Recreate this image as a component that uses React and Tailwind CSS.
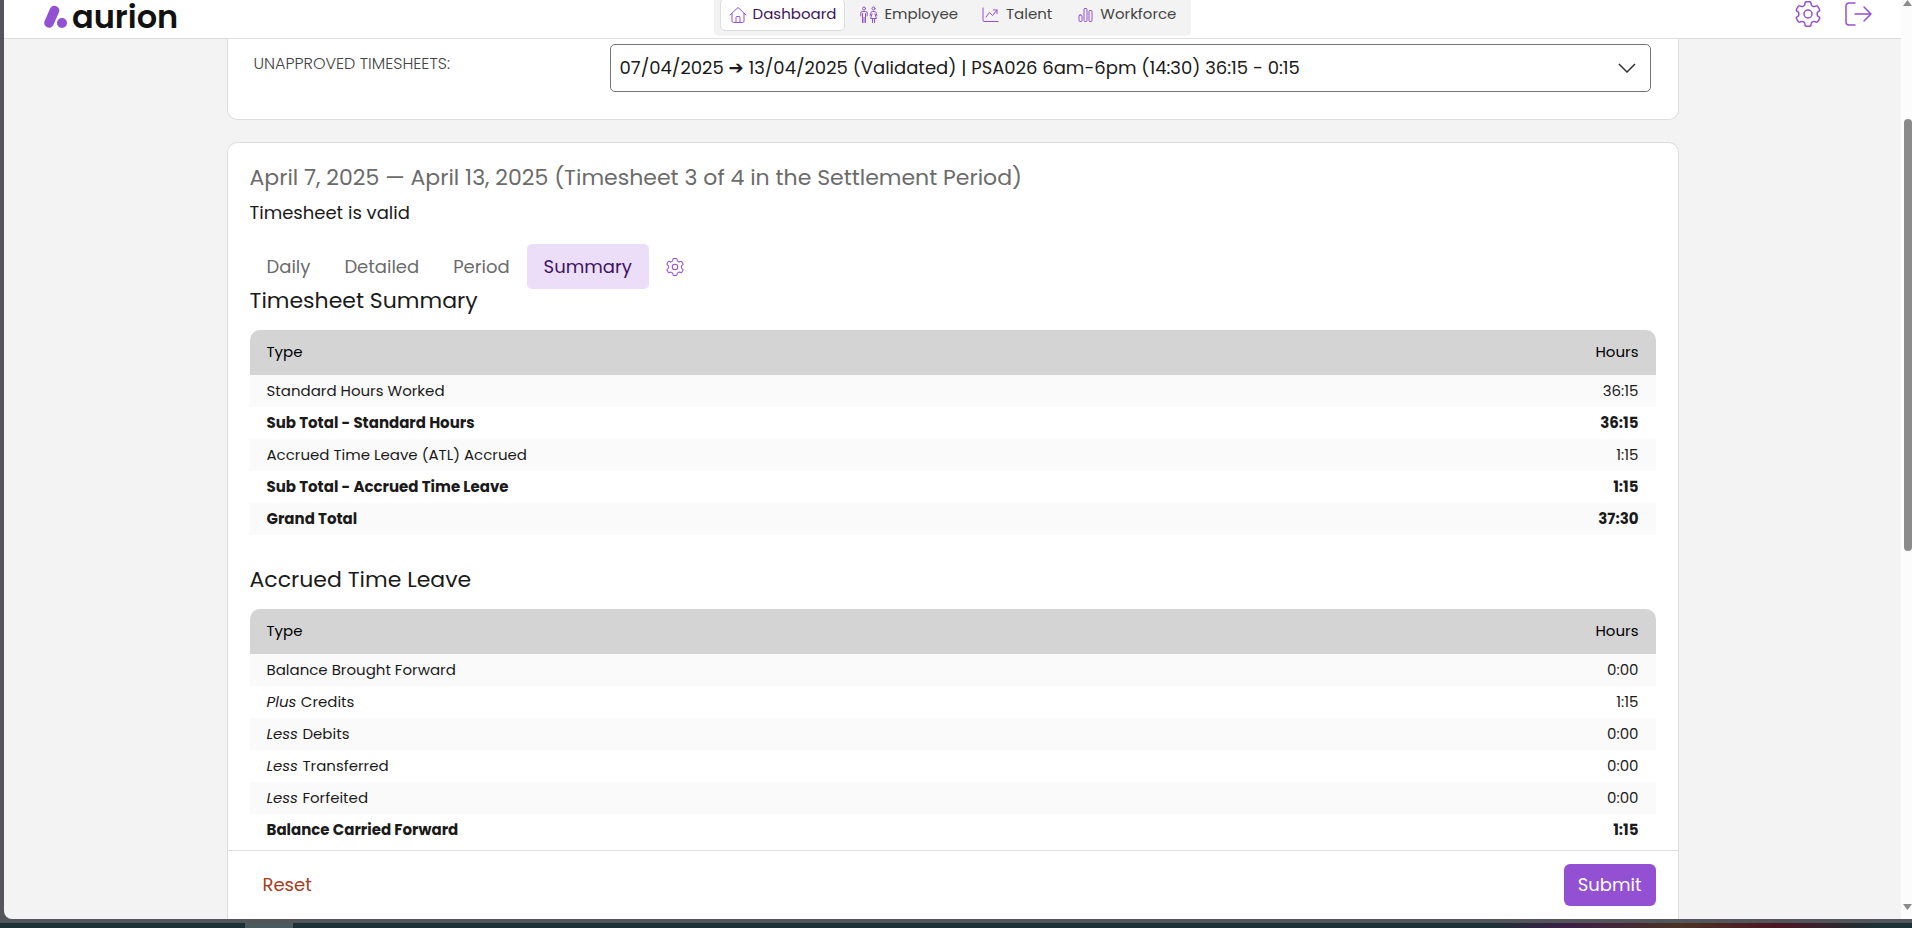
const summaryRows = [
  { type: "Standard Hours Worked", hours: "36:15" },
  { type: "Sub Total - Standard Hours", hours: "36:15", bold: true },
  { type: "Accrued Time Leave (ATL) Accrued", hours: "1:15" },
  { type: "Sub Total - Accrued Time Leave", hours: "1:15", bold: true },
  { type: "Grand Total", hours: "37:30", bold: true },
];

const leaveRows = [
  { type: "Balance Brought Forward", hours: "0:00" },
  { prefix: "Plus", type: "Credits", hours: "1:15" },
  { prefix: "Less", type: "Debits", hours: "0:00" },
  { prefix: "Less", type: "Transferred", hours: "0:00" },
  { prefix: "Less", type: "Forfeited", hours: "0:00" },
  { type: "Balance Carried Forward", hours: "1:15", bold: true },
];

// Outline of a six-toothed gear in a 24 unit box, with every corner rounded.
function gearPath() {
  const corners = [];
  for (let tooth = 0; tooth < 6; tooth += 1) {
    const base = -90 + tooth * 60;
    for (const [offset, radius] of [[-13, 11.7], [13, 11.7], [20, 8.6], [40, 8.6]]) {
      const angle = ((base + offset) * Math.PI) / 180;
      corners.push([12 + radius * Math.cos(angle), 12 + radius * Math.sin(angle)]);
    }
  }
  const mix = (a, b, t) => `${(a[0] + (b[0] - a[0]) * t).toFixed(2)} ${(a[1] + (b[1] - a[1]) * t).toFixed(2)}`;
  const count = corners.length;
  const parts = corners.map((corner, i) => {
    const before = corners[(i + count - 1) % count];
    const after = corners[(i + 1) % count];
    return `${i === 0 ? "M" : "L"}${mix(corner, before, 0.35)}Q${mix(corner, corner, 0)} ${mix(corner, after, 0.35)}`;
  });
  return `${parts.join("")}Z`;
}

const GEAR_PATH = gearPath();

function Gear({ className }) {
  return (
    <svg viewBox="0 0 24 24" className={className} fill="none" stroke="currentColor" strokeWidth="1.400" strokeLinejoin="round" aria-hidden="true">
      <path d={GEAR_PATH} />
      <circle cx="12" cy="12" r="3.700" />
    </svg>
  );
}

function NavIcon({ name }) {
  return (
    <svg viewBox="0 0 18 18" className="size-[18px] shrink-0 text-[#9450d2]" fill="none" stroke="currentColor" strokeWidth="1" strokeLinecap="round" strokeLinejoin="round" aria-hidden="true">
      {name === "home" && (
        <path d="M1 9 9 1.500 17 9M3 7.500v7.500a1.500 1.500 0 0 0 1.500 1.500h9a1.500 1.500 0 0 0 1.500-1.500V7.500M7 16.500v-5a1 1 0 0 1 1-1h2a1 1 0 0 1 1 1v5" />
      )}
      {name === "people" && (
        <>
          <circle cx="4" cy="2.500" r="1.500" />
          <path d="M.8 10V7a1.500 1.500 0 0 1 1.500-1.500h3.400A1.500 1.500 0 0 1 7.200 7v3M2.500 7.500v9M5.500 7.500v9M4 11.500v5" />
          <circle cx="13.500" cy="2.500" r="1.500" />
          <path d="M10.200 9.500 11 6.700a1.500 1.500 0 0 1 1.400-1.200h2.200A1.500 1.500 0 0 1 16 6.700l.8 2.800M12 8l-1.500 4.500h6L15 8M12.500 12.500v4M14.500 12.500v4" />
        </>
      )}
      {name === "trend" && <path d="M1 2v12.500a1 1 0 0 0 1 1h14M4 11l3.500-4.500 3 3L15 4M11.500 4H15v3.500" />}
      {name === "bars" && (
        <>
          <rect x="3" y="9" width="3" height="6.500" rx="1" />
          <rect x="8" y="2.500" width="3" height="13" rx="1" />
          <rect x="13" y="4.500" width="3" height="11" rx="1" />
        </>
      )}
    </svg>
  );
}

function NavLink({ icon, active, children }) {
  return (
    <a
      href="#"
      aria-current={active ? "page" : undefined}
      className={
        active
          ? "flex h-[33px] items-center gap-1.5 rounded-[5px] border border-[#dedede] bg-white px-2 text-[15px] text-[#3c1361]"
          : "flex h-[33px] items-center gap-1.5 border border-transparent px-2 text-[15px] text-[#444]"
      }
    >
      <NavIcon name={icon} />
      {children}
    </a>
  );
}

function HoursTable({ title, rows }) {
  return (
    <section>
      <h2 className="text-[22px] leading-8 text-[#1a1a1a]">{title}</h2>
      <table className="mt-[13px] w-full border-separate border-spacing-0 text-[15px] text-[#1a1a1a]">
        <thead>
          <tr className="h-[45px] text-black">
            <th scope="col" className="rounded-tl-[10px] bg-[#d4d4d4] px-[17px] text-left font-normal">Type</th>
            <th scope="col" className="rounded-tr-[10px] bg-[#d4d4d4] px-[17px] text-right font-normal">Hours</th>
          </tr>
        </thead>
        <tbody>
          {rows.map((row) => (
            <tr key={row.type} className={row.bold ? "h-8 font-bold odd:bg-[#fafafa]" : "h-8 odd:bg-[#fafafa]"}>
              <td className="px-[17px]">
                {row.prefix && <em>{row.prefix} </em>}
                {row.type}
              </td>
              <td className="px-[17px] text-right">{row.hours}</td>
            </tr>
          ))}
        </tbody>
      </table>
    </section>
  );
}

export default function App() {
  return (
    <div className="flex h-screen flex-col overflow-hidden bg-[#54555a] font-[Poppins,Inter,sans-serif] text-[#1a1a1a]">
      <div className="ml-1 flex min-h-0 flex-1 overflow-hidden rounded-bl-lg bg-[#f3f3f3]">
        <div className="flex min-w-0 flex-1 flex-col">
          <header className="grid h-[39px] shrink-0 grid-cols-[1fr_auto_1fr] items-start border-b border-[#dedede] bg-white">
            <a href="#" aria-label="aurion" className="flex h-7 items-end gap-1 pl-10">
              <svg viewBox="0 0 24 23" className="h-[23px] w-6" aria-hidden="true">
                <path d="M5 18 10.500 5.500" stroke="#9450d2" strokeWidth="9.500" strokeLinecap="round" />
                <circle cx="18" cy="18" r="5" fill="#9450d2" />
              </svg>
              <span className="text-[32px] leading-[22px] font-semibold text-[#111]">aurion</span>
            </a>
            <nav className="flex h-9 items-end gap-1.5 rounded-b-[5px] bg-[#f3f3f3] px-1.5 pb-[5px]">
              <NavLink icon="home" active>Dashboard</NavLink>
              <NavLink icon="people">Employee</NavLink>
              <NavLink icon="trend">Talent</NavLink>
              <NavLink icon="bars">Workforce</NavLink>
            </nav>
            <div className="flex h-7 items-center justify-end gap-6 pr-7 text-[#9450d2]">
              <button type="button" aria-label="Settings"><Gear className="size-[26px]" /></button>
              <button type="button" aria-label="Sign out">
                <svg viewBox="0 0 28 24" className="h-6 w-7" fill="none" stroke="currentColor" strokeWidth="1.500" strokeLinecap="round" strokeLinejoin="round" aria-hidden="true">
                  <path d="M10 1H4a3 3 0 0 0-3 3v16a3 3 0 0 0 3 3h6M10 12h16M19 5l7 7-7 7" />
                </svg>
              </button>
            </div>
          </header>

          <main className="mx-auto flex min-h-0 w-full max-w-[1452px] flex-1 flex-col">
            <div className="flex shrink-0 items-start rounded-b-[10px] border border-t-0 border-[#dedede] bg-white pt-[5px] pr-[27px] pb-[27px] pl-[26px]">
              <label htmlFor="timesheets" className="w-[356px] pt-2 text-base font-light text-[#444]">UNAPPROVED TIMESHEETS:</label>
              <div className="grid flex-1 items-center">
                <select id="timesheets" className="col-start-1 row-start-1 h-12 w-full appearance-none rounded-[5px] border border-[#757575] bg-white px-[9px] font-[Poppins,'DejaVu_Sans',sans-serif] text-lg">
                  <option>07/04/2025 ➔ 13/04/2025 (Validated) | PSA026 6am-6pm (14:30) 36:15 - 0:15</option>
                </select>
                <svg viewBox="0 0 18 10" className="pointer-events-none col-start-1 row-start-1 mr-[15px] h-2.5 w-[18px] justify-self-end" fill="none" stroke="#333" strokeWidth="1.500" aria-hidden="true">
                  <path d="m1 1 8 8 8-8" />
                </svg>
              </div>
            </div>

            <div className="mt-[22px] flex min-h-0 flex-1 flex-col rounded-t-[10px] border border-b-0 border-[#dedede] bg-white">
              <div className="min-h-0 flex-1 overflow-hidden px-[22px] pt-[19px]">
                <h1 className="text-[22px] leading-8 text-[#6b6b6b]">April 7, 2025 — April 13, 2025 (Timesheet 3 of 4 in the Settlement Period)</h1>
                <p className="mt-[3px] text-lg leading-8">Timesheet is valid</p>
                <div className="mt-[15px] flex h-[45px] items-stretch text-lg text-[#6b6b6b]">
                  <button type="button" className="px-[17px]">Daily</button>
                  <button type="button" className="px-[17px]">Detailed</button>
                  <button type="button" className="px-[17px]">Period</button>
                  <button type="button" className="rounded-[5px] bg-[#ecdef9] px-[17px] text-[#3c1361]">Summary</button>
                  <button type="button" aria-label="Timesheet settings" className="px-[17px] text-[#9450d2]"><Gear className="size-[18px]" /></button>
                </div>
                <div className="-mt-1 flex flex-col gap-[29px]">
                  <HoursTable title="Timesheet Summary" rows={summaryRows} />
                  <HoursTable title="Accrued Time Leave" rows={leaveRows} />
                </div>
              </div>
              <footer className="flex h-[69px] shrink-0 items-center justify-between border-t border-[#dedede] pr-[22px] pl-[35px] text-lg">
                <button type="button" className="text-[#a63a1a]">Reset</button>
                <button type="button" className="h-[42px] rounded-md bg-[#9450d2] px-3.5 text-white">Submit</button>
              </footer>
            </div>
          </main>
        </div>

        <div className="flex w-[11px] shrink-0 flex-col items-end overflow-hidden bg-[#fcfcfc]" aria-hidden="true">
          <svg viewBox="0 0 9 6" className="h-1.5 w-[9px] shrink-0" fill="#8b8b8b"><path d="M0 6 4.500 0 9 6z" /></svg>
          <div className="flex min-h-0 w-2 flex-1 flex-col pt-[113px] pb-[353px]">
            <div className="flex-1 rounded-t-md rounded-b-md bg-[#8b8b8b]" />
          </div>
          <svg viewBox="0 0 9 6" className="mb-[9px] h-1.5 w-[9px] shrink-0" fill="#8b8b8b"><path d="M0 0h9L4.500 6z" /></svg>
        </div>
      </div>
      <div className="mt-1 flex h-[5px] shrink-0 bg-[linear-gradient(90deg,#1d3035_78%,#3b2046_82%,#4a3224_88%,#4c1624_93%,#1d3035_98%)]">
        <div className="ml-[245px] w-12 bg-[#4b5a5c]" />
      </div>
    </div>
  );
}
